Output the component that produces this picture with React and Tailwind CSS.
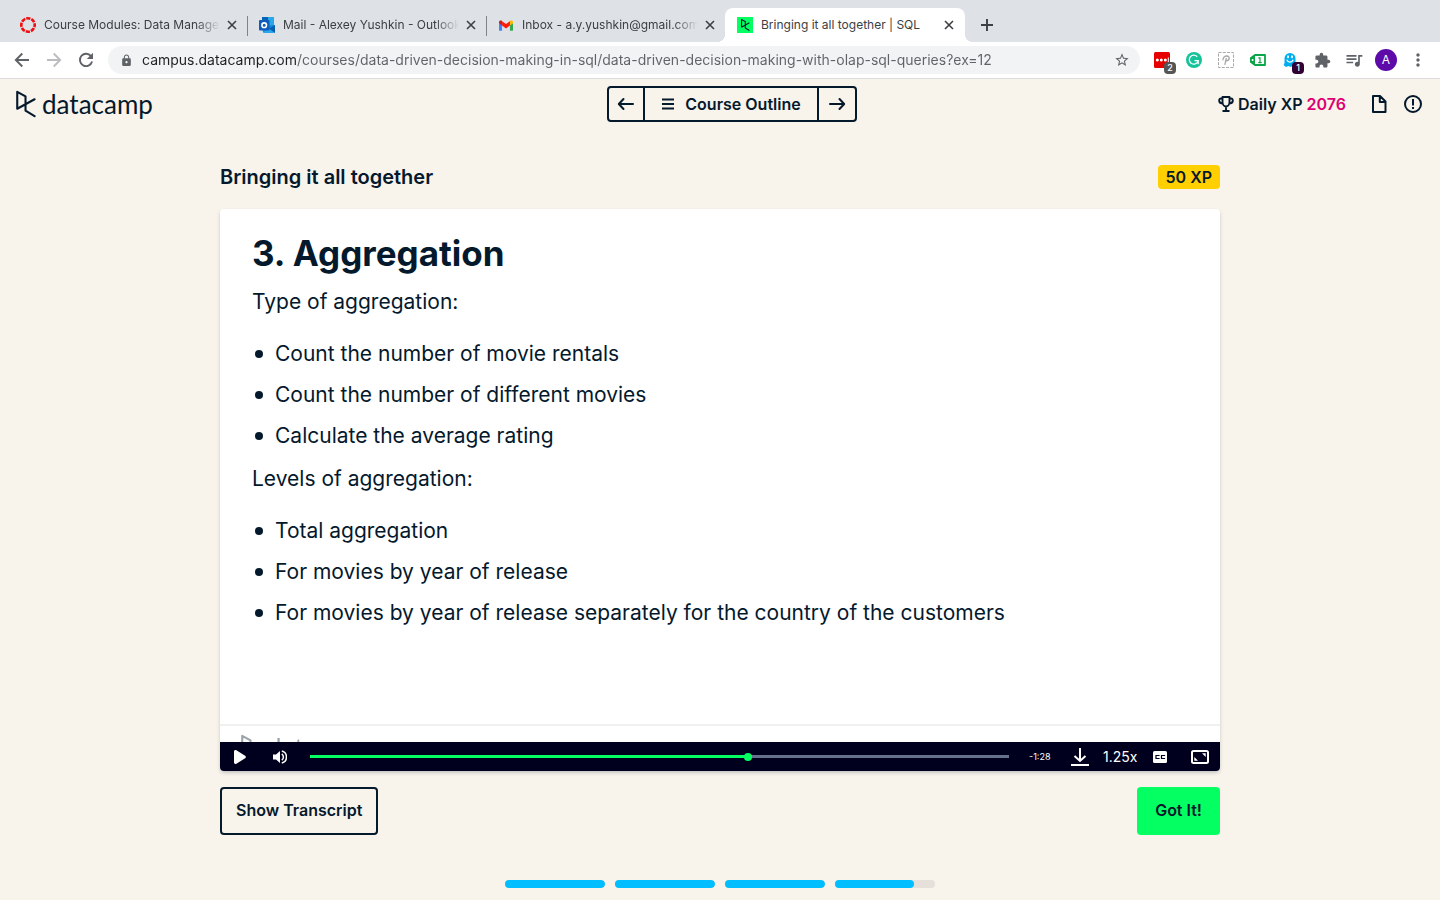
import React from "react";
import { MdStarBorder, MdExtension, MdQueueMusic, MdMoreVert, MdLock } from "react-icons/md";

function LogoMark({ className }) {
  return (
    <svg viewBox="0 0 21 28" className={className} fill="none" stroke="currentColor" strokeWidth="2.2" strokeLinejoin="round" strokeLinecap="round" aria-hidden="true">
      <path d="M1.3 19V1.2L10 6v15l9.5 5.8M1.3 19L19.5 9" />
    </svg>
  );
}

function Logo() {
  return (
    <span className="flex items-center gap-1.5">
      <LogoMark className="h-7 w-5 shrink-0" />
      <span className="font-[Lato,sans-serif] text-[26px] leading-7">datacamp</span>
    </span>
  );
}

function CanvasIcon() {
  return (
    <svg viewBox="0 0 16 16" className="size-4" aria-hidden="true">
      <circle cx="8" cy="8" r="6.7" fill="none" stroke="#f00d0d" strokeWidth="2.6" strokeDasharray="4.2 1.06" strokeDashoffset="2" />
    </svg>
  );
}

function OutlookIcon() {
  return (
    <svg viewBox="0 0 16 16" className="size-4" aria-hidden="true">
      <rect x="3" y="0" width="12" height="10" fill="#28a8ea" />
      <rect x="3" y="0" width="6" height="3" fill="#0364b8" />
      <path d="M3 8l13 0v7.500H4z" fill="#1490df" />
      <path d="M16 8v8l-7-4z" fill="#0a5eb0" />
      <path d="M4 16h12l-7-5z" fill="#28a8ea" />
      <rect x="0" y="3" width="10.500" height="10.500" rx="1" fill="#0f5cbd" />
      <circle cx="5.200" cy="8.200" r="2.300" fill="none" stroke="#fff" strokeWidth="1.600" />
    </svg>
  );
}

function GmailIcon() {
  return (
    <svg viewBox="0 0 16 12" className="mx-auto h-[11px] w-3.5" aria-hidden="true">
      <path d="M0 3v8a1 1 0 0 0 1 1h2.500V5z" fill="#4285f4" />
      <path d="M12.500 12H15a1 1 0 0 0 1-1V3l-3.500 2z" fill="#34a853" />
      <path d="M12.500 1v5L16 3.300V2c0-1.700-1.900-2.400-3.200-1.300z" fill="#fbbc04" />
      <path d="M3.500 6V1L8 4.400 12.500 1v5L8 9.300z" fill="#ff1a0a" />
      <path d="M0 2v1.300L3.500 6V1l-.300-.300C1.900-.400 0 .300 0 2z" fill="#c5221f" />
    </svg>
  );
}

function DcIcon() {
  return (
    <span className="flex size-4 items-center justify-center bg-[#03ff62] text-[#05192d]">
      <svg viewBox="0 0 21 28" className="h-3 w-[9px]" fill="none" stroke="currentColor" strokeWidth="2.600" aria-hidden="true">
        <path d="M1.3 19V1.200L10 6v15l9.500 5.800M1.300 19L19.500 9" />
      </svg>
    </span>
  );
}

function Cross() {
  return (
    <svg viewBox="0 0 10 10" className="size-2.5" stroke="#3c4043" strokeWidth="1.600" aria-hidden="true">
      <path d="M1 1l8 8M9 1l-8 8" />
    </svg>
  );
}

function Tab({ icon, title, active, divider }) {
  return (
    <li className={active
      ? "relative flex h-[34px] w-60 items-center rounded-t-lg bg-white pr-2 pl-3"
      : "relative flex h-[34px] w-[239px] items-center pr-[7px] pl-3"}>
      {active && (
        <>
          <span className="absolute bottom-0 -left-2 size-2 bg-[radial-gradient(circle_at_top_left,transparent_8px,white_8px)]" />
          <span className="absolute -right-2 bottom-0 size-2 bg-[radial-gradient(circle_at_top_right,transparent_8px,white_8px)]" />
        </>
      )}
      <span className="flex size-4 shrink-0 items-center">{icon}</span>
      <a href="#tab" className={active
        ? "mr-1 ml-2 min-w-0 flex-1 overflow-hidden whitespace-nowrap text-xs"
        : "mr-1 ml-2 min-w-0 flex-1 overflow-hidden whitespace-nowrap text-xs [mask-image:linear-gradient(to_right,black_calc(100%-24px),transparent)]"}>
        {title}
      </a>
      <button type="button" aria-label={"Close " + title} className="flex size-4 items-center justify-center">
        <Cross />
      </button>
      {divider && <span className="absolute top-2 -right-px h-5 w-px bg-[#808387]" />}
    </li>
  );
}

function ToolButton({ label, children, badge, badgeClass }) {
  return (
    <button type="button" aria-label={label} className="relative flex size-8 items-center justify-center text-[#5f6368]">
      {children}
      {badge && <span className={badgeClass}>{badge}</span>}
    </button>
  );
}

function BrowserArrow({ flip, color }) {
  return (
    <svg viewBox="0 0 16 16" className={flip ? "size-4 rotate-180" : "size-4"} fill="none" stroke={color} strokeWidth="1.900" aria-hidden="true">
      <path d="M15 8H2M8.300 1.500L1.800 8l6.500 6.500" />
    </svg>
  );
}

function BrowserChrome() {
  return (
    <div className="font-[Inter,sans-serif] text-[#3c4043]">
      <div className="flex h-[42px] items-end bg-[#dee1e6] pl-2">
        <ul className="flex">
          <Tab icon={<CanvasIcon />} title="Course Modules: Data Manage" divider />
          <Tab icon={<OutlookIcon />} title="Mail - Alexey Yushkin - Outlook" divider />
          <Tab icon={<GmailIcon />} title="Inbox - a.y.yushkin@gmail.com" />
          <Tab icon={<DcIcon />} title="Bringing it all together | SQL" active />
        </ul>
        <button type="button" aria-label="New tab" className="ml-3 flex h-[34px] w-5 items-center justify-center">
          <svg viewBox="0 0 12 12" className="size-3" stroke="#3c4043" strokeWidth="1.900" aria-hidden="true">
            <path d="M6 0v12M0 6h12" />
          </svg>
        </button>
      </div>
      <div className="flex h-[37px] items-center border-b border-[#dadce0] bg-white pr-1.5 pl-1.5">
        <ToolButton label="Back"><BrowserArrow color="#5f6368" /></ToolButton>
        <ToolButton label="Forward"><BrowserArrow flip color="#babcbe" /></ToolButton>
        <ToolButton label="Reload">
          <svg viewBox="0 0 16 16" className="size-4" fill="none" stroke="#5f6368" strokeWidth="1.900" aria-hidden="true">
            <path d="M13.300 4.500A6.200 6.200 0 1 0 14.100 9.600" />
            <path d="M15 .8V7H8.800z" fill="#5f6368" stroke="none" />
          </svg>
        </ToolButton>
        <div className="ml-1.5 flex h-7 flex-1 items-center rounded-full bg-[#f1f3f4] pr-2.5 pl-3 text-[#5f6368]">
          <MdLock className="size-[13px] shrink-0" aria-hidden="true" />
          <input
            type="text"
            aria-label="Address"
            defaultValue="campus.datacamp.com/courses/data-driven-decision-making-in-sql/data-driven-decision-making-with-olap-sql-queries?ex=12"
            className="mr-2 ml-[9px] min-w-0 flex-1 bg-[linear-gradient(to_right,#202124_154px,#5f6368_154px)] bg-clip-text font-[Inter,sans-serif] text-sm text-transparent outline-none"
          />
          <button type="button" aria-label="Bookmark"><MdStarBorder className="size-4" /></button>
        </div>
        <div className="ml-1.5 flex">
          <ToolButton label="Password manager" badge="2" badgeClass="absolute right-0.5 bottom-0.5 flex h-3 w-3 items-center justify-center rounded-sm bg-[#555] text-[9px] font-medium text-white">
            <svg viewBox="0 0 16 16" className="size-4" aria-hidden="true">
              <rect width="16" height="16" rx="1.500" fill="#e60000" />
              <circle cx="3.300" cy="8" r="1.500" fill="#fff" /><circle cx="7.300" cy="8" r="1.500" fill="#fff" /><circle cx="11.300" cy="8" r="1.500" fill="#fff" />
              <path d="M14.300 5.500v5" stroke="#fff" />
            </svg>
          </ToolButton>
          <ToolButton label="Grammar checker">
            <svg viewBox="0 0 16 16" className="size-4" fill="none" aria-hidden="true">
              <circle cx="8" cy="8" r="8" fill="#15c39a" />
              <path d="M11.200 4.700A4.500 4.500 0 1 0 12 9.300M8.500 8.700h3.700v3.500" stroke="#fff" strokeWidth="1.300" />
            </svg>
          </ToolButton>
          <ToolButton label="Honey">
            <svg viewBox="0 0 16 16" className="size-4" fill="none" stroke="#a8a8a8" aria-hidden="true">
              <rect x=".5" y=".5" width="15" height="15" strokeDasharray="3 1.300" />
              <path d="M6.800 12.800L8.400 6M5 8.300C4.600 5 7 4 8.800 4c3.400 0 3 4.800-.3 4.800H7" strokeWidth="1.300" />
            </svg>
          </ToolButton>
          <ToolButton label="Coupons">
            <svg viewBox="0 0 16 12" className="h-3 w-4" fill="none" aria-hidden="true">
              <path d="M5 1h10v10H5L1 8V4z" fill="#fff" stroke="#0aa648" strokeWidth="1.800" strokeLinejoin="round" />
              <path d="M0 4l5-3.500v11L0 8z" fill="#0aa648" />
              <circle cx="2.600" cy="6" r="1" fill="#fff" />
              <path d="M8.300 3.800h1.700V9M8.300 8.700h3.400" stroke="#0aa648" strokeWidth="1.200" />
            </svg>
          </ToolButton>
          <ToolButton label="Tracker blocker" badge="1" badgeClass="absolute right-0.5 bottom-0.5 flex h-3 w-3 items-center justify-center rounded-sm bg-[#330033] text-[9px] font-medium text-white">
            <svg viewBox="0 0 16 16" className="size-4" aria-hidden="true">
              <path d="M2.500 6.500a5.500 5.500 0 0 1 11 0V15l-3-1-2 1-2-1-2.500 1-2.500-2c1.500-1.500 1-3.500 1-6.500z" fill="#00aef0" />
              <ellipse cx="6" cy="4.800" rx="1" ry="1.500" fill="#fff" /><ellipse cx="10" cy="4.800" rx="1" ry="1.500" fill="#fff" />
              <path d="M4.800 7.800a3.400 3.400 0 0 0 6.400 0" fill="none" stroke="#fff" strokeWidth="1.200" />
            </svg>
          </ToolButton>
          <ToolButton label="Extensions"><MdExtension className="size-[17px]" /></ToolButton>
          <ToolButton label="Media control"><MdQueueMusic className="size-5" /></ToolButton>
          <ToolButton label="Profile">
            <span className="flex size-[22px] items-center justify-center rounded-full bg-[#5e0aa8] text-xs text-white">A</span>
          </ToolButton>
          <ToolButton label="Menu"><MdMoreVert className="size-5" /></ToolButton>
        </div>
      </div>
    </div>
  );
}

function NavArrow({ flip }) {
  return (
    <svg viewBox="0 0 18 14" className={flip ? "h-3.5 w-[18px] rotate-180" : "h-3.5 w-[18px]"} fill="none" stroke="currentColor" strokeWidth="2" strokeLinecap="round" strokeLinejoin="round" aria-hidden="true">
      <path d="M16 7H2M6.500 2L1.800 7l4.700 5" />
    </svg>
  );
}

function CourseHeader() {
  return (
    <header className="flex h-[50px] items-center justify-between pr-[18px] pl-4">
      <a href="#home" aria-label="DataCamp home" className="w-[230px]"><Logo /></a>
      <nav className="flex h-9 divide-x-2 divide-[#05192d] rounded border-2 border-[#05192d]">
        <button type="button" aria-label="Previous" className="flex w-9 items-center justify-center"><NavArrow /></button>
        <button type="button" className="flex items-center gap-2.5 px-4 font-semibold">
          <svg viewBox="0 0 14 12" className="h-3 w-3.5" stroke="currentColor" strokeWidth="2" aria-hidden="true">
            <path d="M1 1.500h12M1 6h12M1 10.500h12" />
          </svg>
          Course Outline
        </button>
        <button type="button" aria-label="Next" className="flex w-9 items-center justify-center"><NavArrow flip /></button>
      </nav>
      <div className="flex items-center">
        <svg viewBox="0 0 16 16" className="mr-1 size-4" fill="none" stroke="currentColor" strokeWidth="1.900" strokeLinejoin="round" aria-hidden="true">
          <path d="M4.500 1h7v5c0 2.500-1.700 4.500-3.500 4.500S4.500 8.500 4.500 6zM4.500 2.500H3C.3 2.500.3 7.500 4.800 7.500M11.500 2.500H13c2.700 0 2.700 5-1.800 5M8 10.500V15M4.500 15h7" />
        </svg>
        <span className="font-semibold">Daily XP <span className="text-[#dc0073]">2076</span></span>
        <button type="button" aria-label="Resources" className="ml-6">
          <svg viewBox="0 0 18 18" className="size-[18px]" fill="none" stroke="currentColor" strokeWidth="2" strokeLinejoin="round" aria-hidden="true">
            <path d="M3 1h7L15.500 6.500V17H3zM9.800 1v6h5.700" />
          </svg>
        </button>
        <button type="button" aria-label="Report issue" className="ml-4">
          <svg viewBox="0 0 18 18" className="size-[18px]" fill="none" stroke="currentColor" strokeWidth="2" aria-hidden="true">
            <circle cx="9" cy="9" r="8" />
            <path d="M9 4v6.500M9 12v2" />
          </svg>
        </button>
      </div>
    </header>
  );
}

function BulletList({ items }) {
  return (
    <ul className="pt-[11px] pb-0.5">
      {items.map((item) => (
        <li key={item} className="flex items-center gap-3 pl-[3px] leading-[41px]">
          <span className="size-2 shrink-0 rounded-full bg-[#05192d]" />
          {item}
        </li>
      ))}
    </ul>
  );
}

function Slide() {
  return (
    <div className="flex h-[533px] flex-col overflow-hidden bg-white">
      <div className="flex-1 px-8 pt-5 text-[21px]">
        <h2 className="mb-1 text-[35px] leading-[48px] font-bold">3. Aggregation</h2>
        <p className="leading-[41px]">Type of aggregation:</p>
        <BulletList items={["Count the number of movie rentals", "Count the number of different movies", "Calculate the average rating"]} />
        <p className="leading-[41px]">Levels of aggregation:</p>
        <BulletList items={["Total aggregation", "For movies by year of release", "For movies by year of release separately for the country of the customers"]} />
      </div>
      <div className="h-[18px] shrink-0 overflow-hidden border-t-2 border-[#f0f0ef] pt-2 pl-[21px]">
        <div className="opacity-40"><Logo /></div>
      </div>
    </div>
  );
}

function PlayerControls() {
  return (
    <div className="flex h-[29px] items-center bg-[#00001e] pr-[11px] pl-3.5 text-white">
      <button type="button" aria-label="Play">
        <svg viewBox="0 0 12 14" className="h-3.5 w-3" fill="currentColor" aria-hidden="true">
          <path d="M0 1.500C0 .3 1.300-.4 2.400.3l8.700 5.500c1 .6 1 1.800 0 2.400l-8.700 5.500C1.300 14.400 0 13.700 0 12.500z" />
        </svg>
      </button>
      <button type="button" aria-label="Volume" className="ml-[27px]">
        <svg viewBox="0 0 14 14" className="size-3.5" fill="none" stroke="currentColor" strokeWidth="1.500" aria-hidden="true">
          <path d="M0 4.500h3L7 1v12L3 9.500H0z" fill="currentColor" stroke="none" />
          <path d="M8.800 3.800a4 4 0 0 1 0 6.400M8.800 1a6.200 6.200 0 0 1 0 12" />
        </svg>
      </button>
      <input
        type="range"
        aria-label="Seek"
        min="0"
        max="1000"
        defaultValue="628"
        className="ml-[23px] h-[3px] min-w-0 flex-1 appearance-none bg-[linear-gradient(to_right,#03ff62_62.7%,#65708c_62.7%)] [&::-webkit-slider-thumb]:size-2 [&::-webkit-slider-thumb]:appearance-none [&::-webkit-slider-thumb]:rounded-full [&::-webkit-slider-thumb]:bg-[#03ff62]"
      />
      <span className="ml-5 w-[22px] text-[9px] whitespace-nowrap">-1:28</span>
      <button type="button" aria-label="Download" className="ml-5">
        <svg viewBox="0 0 18 18" className="size-[18px]" fill="none" stroke="currentColor" strokeWidth="2" aria-hidden="true">
          <path d="M9 0v13M3.500 8L9 13l5.500-5M0 17h18" />
        </svg>
      </button>
      <button type="button" aria-label="Playback speed" className="ml-3.5 w-[34px] text-center text-sm">1.25x</button>
      <button type="button" aria-label="Captions" className="ml-4">
        <svg viewBox="0 0 14 12" className="h-3 w-3.5" fill="none" aria-hidden="true">
          <rect width="14" height="12" rx="1.500" fill="#fff" />
          <path d="M6 5V4.500H3v3h3V7M11.500 5v-.5h-3v3h3V7" stroke="#00001e" strokeWidth="1.200" />
        </svg>
      </button>
      <button type="button" aria-label="Fullscreen" className="ml-6">
        <svg viewBox="0 0 18 14" className="h-3.5 w-[18px]" fill="none" stroke="currentColor" strokeWidth="2" aria-hidden="true">
          <rect x="1" y="1" width="16" height="12" rx="1.500" />
          <path d="M11 3.300h3.700V7zM7 10.700H3.300V7z" fill="currentColor" stroke="none" />
        </svg>
      </button>
    </div>
  );
}

function ChapterProgress() {
  return (
    <div className="mt-auto flex justify-center gap-2.5 pb-3">
      {[100, 100, 100, 79].map((value, i) => (
        <div key={i} role="progressbar" aria-label={"Chapter " + (i + 1)} aria-valuenow={value} className="h-2 w-[100px] overflow-hidden rounded-full bg-[#e5e1da]">
          <div className="h-full rounded-r-full bg-[#00beff]" style={{ width: value + "%" }} />
        </div>
      ))}
    </div>
  );
}

export default function App() {
  return (
    <div className="flex min-h-screen flex-col bg-[#f8f3eb] font-[Inter,sans-serif] text-[#05192d]">
      <BrowserChrome />
      <CourseHeader />
      <main className="mx-auto w-full max-w-[1000px]">
        <div className="mt-9 flex h-6 items-center justify-between">
          <h1 className="text-xl font-semibold">Bringing it all together</h1>
          <span className="rounded bg-[#ffcf00] px-2 leading-6 font-semibold">50 XP</span>
        </div>
        <section className="mt-5 overflow-hidden rounded shadow-[0_2px_4px_-1px_rgba(5,25,45,0.3)]">
          <Slide />
          <PlayerControls />
        </section>
        <div className="mt-4 flex justify-between font-semibold">
          <button type="button" className="h-12 rounded border-2 border-[#05192d] px-3.5 pb-0.5">Show Transcript</button>
          <button type="button" className="h-12 rounded bg-[#03ff62] px-[18px] pb-0.5">Got It!</button>
        </div>
      </main>
      <ChapterProgress />
    </div>
  );
}
